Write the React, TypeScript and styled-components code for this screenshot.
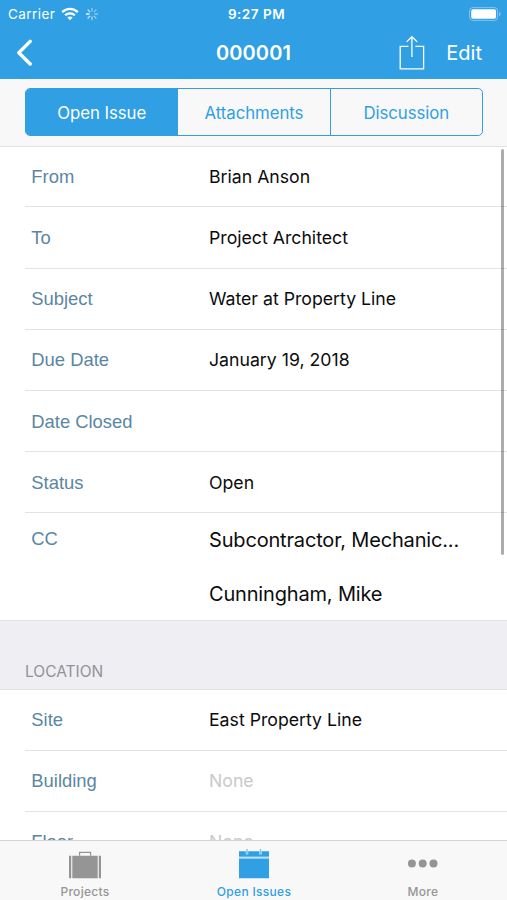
import React from 'react'
import styled, { createGlobalStyle } from 'styled-components'

const colors = {
    main: '#309fe3',
    label: '#5b86a3',
    bar: '#f8f8f8',
    line: '#e3e3e5',
    grey: '#959595',
}

const GlobalStyle = createGlobalStyle`
    * {
        box-sizing: border-box;
    }
    body {
        margin: 0;
        background: white;
        font-family: Inter, Roboto, sans-serif;
    }
`

const Screen = styled.div`
    display: flex;
    flex-direction: column;
    position: relative;
    width: 507px;
    height: 900px;
    overflow: hidden;
    background: white;
`

const Header = styled.header`
    flex: none;
    height: 79px;
    background: ${colors.main};
    color: white;
`

const StatusBar = styled.div`
    display: grid;
    grid-template-columns: 1fr auto 1fr;
    align-items: center;
    height: 27px;
    padding: 0 5px 0 8px;
    font-size: 13.5px;
`

const Carrier = styled.div`
    display: flex;
    align-items: center;
    letter-spacing: 0.42px;
    svg {
        margin-left: 6px;
    }
`

const Clock = styled.div`
    font-weight: 600;
    letter-spacing: 0.5px;
    padding-left: 3px;
`

const Battery = styled.div`
    display: flex;
    justify-content: flex-end;
`

const NavBar = styled.div`
    display: grid;
    grid-template-columns: 1fr auto 1fr;
    align-items: center;
    height: 52px;
    padding: 0 25px 0 15px;
`

const Title = styled.h1`
    margin: 0;
    padding-left: 10px;
    font-size: 20px;
    font-weight: 600;
    letter-spacing: 0.1px;
`

const NavActions = styled.div`
    display: flex;
    justify-content: flex-end;
    align-items: center;
    gap: 21.5px;
    font-size: 20px;
`

const SegmentBar = styled.div`
    flex: none;
    height: 68px;
    padding: 9px 24px 0 25px;
    background: ${colors.bar};
    border-bottom: 1px solid ${colors.line};
`

const Segments = styled.div`
    display: flex;
    height: 48px;
    border: 1px solid ${colors.main};
    border-radius: 5px;
    overflow: hidden;
`

const Segment = styled.button<{ $active?: boolean }>`
    flex: 1;
    padding: 2px 0 0;
    border: 0;
    border-left: 1px solid ${colors.main};
    background: ${({ $active }) => ($active ? colors.main : 'transparent')};
    color: ${({ $active }) => ($active ? 'white' : colors.main)};
    font-family: inherit;
    font-size: 16.8px;
    letter-spacing: -0.05px;
    &:first-child {
        border-left: 0;
    }
`

const Content = styled.main`
    flex: 1;
    min-height: 0;
    overflow: hidden;
`

const Rows = styled.div`
    padding-left: 25px;
`

const Row = styled.div<{ $height?: number; $offset?: number }>`
    display: grid;
    grid-template-columns: 177.7px 1fr;
    align-items: center;
    height: ${({ $height }) => $height || 61.15}px;
    padding: ${({ $offset }) => $offset || 0}px 0 0 6.3px;
    border-bottom: 1px solid ${colors.line};
`

const CcRow = styled.div`
    display: grid;
    grid-template-columns: 177.7px 1fr;
    height: 106.85px;
    padding: 13px 0 0 6.3px;
`

const Label = styled.div`
    color: ${colors.label};
    font-family: "Liberation Sans", Arial, sans-serif;
    font-size: 18.4px;
    line-height: 26px;
`

const Value = styled.div<{ $empty?: boolean }>`
    color: ${({ $empty }) => ($empty ? '#c9c9cc' : '#0c0c0c')};
    font-size: 17.7px;
    line-height: 26px;
`

const Person = styled.div`
    height: 54px;
    color: #0c0c0c;
    font-size: 20px;
    line-height: 28px;
    letter-spacing: -0.17px;
`

const SectionHeader = styled.h2`
    height: 70px;
    margin: 0;
    padding: 40px 25px 0;
    background: #eeeef3;
    border-top: 1px solid ${colors.line};
    border-bottom: 1px solid ${colors.line};
    color: #929297;
    font-size: 15.5px;
    font-weight: 400;
    line-height: 22px;
`

const ScrollThumb = styled.div`
    position: absolute;
    top: 149px;
    right: 3px;
    width: 3px;
    height: 406px;
    border-radius: 2px;
    background: rgba(0, 0, 0, 0.32);
`

const TabBar = styled.nav`
    flex: none;
    display: grid;
    grid-template-columns: repeat(3, 1fr);
    height: 60px;
    background: ${colors.bar};
    border-top: 1px solid #d3d3d4;
`

const Tab = styled.div<{ $active?: boolean }>`
    display: flex;
    flex-direction: column;
    align-items: center;
    padding: 7px 0 0 1px;
    color: ${({ $active }) => ($active ? colors.main : colors.grey)};
    font-size: 12px;
    font-weight: 500;
    line-height: 16px;
    letter-spacing: 0.3px;
    svg {
        flex: none;
        margin-bottom: 4px;
    }
`

const WifiIcon = () => (
    <svg width="18" height="14" viewBox="0 0 18 14" fill="none" stroke="white" strokeWidth="2.2">
        <path d="M1.2 5.1C5.6.8 12.4.8 16.8 5.1" />
        <path d="M4.1 8.3c2.8-2.7 7-2.7 9.8 0" />
        <path d="M9 13.2 6.3 10.5c1.5-1.4 3.9-1.4 5.4 0Z" fill="white" stroke="none" />
    </svg>
)

const SpinnerIcon = () => (
    <svg width="14" height="14" viewBox="-7 -7 14 14" stroke="white" strokeWidth="1.3" strokeLinecap="round">
        {[0.45, 0.4, 0.45, 0.5, 0.6, 0.75, 0.95, 0.7].map((opacity, i) => (
            <path key={i} d="M0-3V-5.6" opacity={opacity} transform={`rotate(${i * 45})`} />
        ))}
    </svg>
)

const BatteryIcon = () => (
    <svg width="33" height="14" viewBox="0 0 33 14">
        <rect x=".6" y=".6" width="28" height="12.8" rx="3.2" fill="none" stroke="white" strokeOpacity=".4" />
        <rect x="2.2" y="2.2" width="24.8" height="9.6" rx="1.8" fill="white" />
        <path d="M30.3 4.8v4.4c1.8-.8 1.8-3.6 0-4.4Z" fill="white" opacity=".5" />
    </svg>
)

const BackIcon = () => (
    <svg width="20" height="28" viewBox="0 0 20 28" fill="none" stroke="white" strokeWidth="3.4" strokeLinecap="round" strokeLinejoin="round">
        <path d="M15.2 2.4 3.8 13.8 15.2 25" />
    </svg>
)

const ShareIcon = () => (
    <svg width="26" height="36" viewBox="0 0 26 36" fill="none" stroke="white" strokeWidth="1.3">
        <path d="M9.4 11.4H1.2v22.4h23.4V11.4h-8.2" />
        <path d="M12.9 22V1.8M7.6 6.9l5.3-5.2 5.3 5.2" />
    </svg>
)

const BriefcaseIcon = () => (
    <svg width="34" height="32" viewBox="0 0 34 32" fill="currentColor">
        <path d="M11.6 7.8V4.4h11v3.4" fill="none" stroke="currentColor" strokeWidth="1.2" />
        <path d="M1 7.8h2.2v22.4H1zM4.3 7.8h25.4v22.4H4.3zM30.8 7.8H33v22.4h-2.2z" />
    </svg>
)

const CalendarIcon = () => (
    <svg width="32" height="32" viewBox="0 0 32 32" fill="currentColor">
        <path d="M1 3.2h30v5.5H1zM1 10.3h30v20H1z" />
        <path d="M1 9.7h30" stroke="#b9e0f7" strokeWidth="1.6" />
        <path d="M9 3v3.6M22.5 3v3.6" stroke="#b9e0f7" strokeWidth="2.6" />
        <path d="M9 1v5M22.5 1v5" stroke="#7cc3ee" strokeWidth="1.4" />
    </svg>
)

const MoreIcon = () => (
    <svg width="32" height="32" viewBox="0 0 32 32" fill="currentColor">
        <circle cx="4.9" cy="15.4" r="4" />
        <circle cx="15.7" cy="15.4" r="4" />
        <circle cx="26.5" cy="15.4" r="4" />
    </svg>
)

const issue = [
    { label: 'From', value: 'Brian Anson', height: 60.4 },
    { label: 'To', value: 'Project Architect' },
    { label: 'Subject', value: 'Water at Property Line' },
    { label: 'Due Date', value: 'January 19, 2018' },
    { label: 'Date Closed', value: '' },
    { label: 'Status', value: 'Open' },
]

const location = [
    { label: 'Site', value: 'East Property Line' },
    { label: 'Building', value: '' },
    { label: 'Floor', value: '' },
]

const App: React.FC = () => {
    return (
        <Screen>
            <GlobalStyle />
            <Header>
                <StatusBar>
                    <Carrier>
                        Carrier
                        <WifiIcon />
                        <SpinnerIcon />
                    </Carrier>
                    <Clock>9:27 PM</Clock>
                    <Battery><BatteryIcon /></Battery>
                </StatusBar>
                <NavBar>
                    <BackIcon />
                    <Title>000001</Title>
                    <NavActions>
                        <ShareIcon />
                        <span>Edit</span>
                    </NavActions>
                </NavBar>
            </Header>
            <SegmentBar>
                <Segments>
                    <Segment $active>Open Issue</Segment>
                    <Segment>Attachments</Segment>
                    <Segment>Discussion</Segment>
                </Segments>
            </SegmentBar>
            <Content>
                <Rows>
                    {issue.map(({ label, value, height }) => (
                        <Row key={label} $height={height} $offset={1.4}>
                            <Label>{label}</Label>
                            <Value>{value}</Value>
                        </Row>
                    ))}
                    <CcRow>
                        <Label>CC</Label>
                        <div>
                            <Person>Subcontractor, Mechanic...</Person>
                            <Person>Cunningham, Mike</Person>
                        </div>
                    </CcRow>
                </Rows>
                <SectionHeader>LOCATION</SectionHeader>
                <Rows>
                    {location.map(({ label, value }) => (
                        <Row key={label}>
                            <Label>{label}</Label>
                            <Value $empty={!value}>{value || 'None'}</Value>
                        </Row>
                    ))}
                </Rows>
            </Content>
            <ScrollThumb />
            <TabBar>
                <Tab>
                    <BriefcaseIcon />
                    Projects
                </Tab>
                <Tab $active>
                    <CalendarIcon />
                    Open Issues
                </Tab>
                <Tab>
                    <MoreIcon />
                    More
                </Tab>
            </TabBar>
        </Screen>
    )
}

export default App
